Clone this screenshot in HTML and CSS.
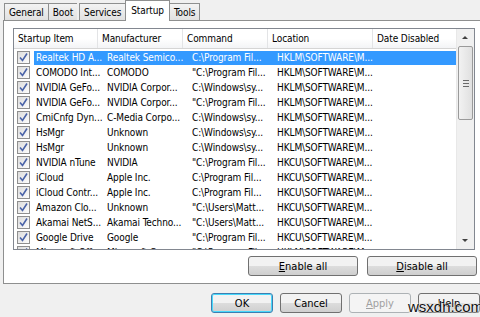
FILE: index.html
```html
<!DOCTYPE html>
<html lang="en">
<head>
  <meta charset="UTF-8">
  <title>System Configuration - Startup</title>
  <link rel="stylesheet" href="styles.css">
</head>
<body>
  <div class="tabs">
    <div class="tab">General</div>
    <div class="tab">Boot</div>
    <div class="tab">Services</div>
    <div class="tab active">Startup</div>
    <div class="tab">Tools</div>
  </div>

  <div class="panel">
    <div class="list">
      <div class="list-body">
        <div class="header">
          <div class="col c1">Startup Item</div>
          <div class="col c2">Manufacturer</div>
          <div class="col c3">Command</div>
          <div class="col c4">Location</div>
          <div class="col c5">Date Disabled</div>
        </div>
        <div class="rows">
          <div class="row selected"><span class="check"><svg viewBox="0 0 11 11"><path d="M2 5.5 L4.5 8.5 L9 1.5"/></svg></span><div class="cells"><div class="col c1">Realtek HD A...</div><div class="col c2">Realtek Semico...</div><div class="col c3">C:\Program Fil...</div><div class="col c4">HKLM\SOFTWARE\M...</div></div></div>
          <div class="row"><span class="check"><svg viewBox="0 0 11 11"><path d="M2 5.5 L4.5 8.5 L9 1.5"/></svg></span><div class="cells"><div class="col c1">COMODO Int...</div><div class="col c2">COMODO</div><div class="col c3">"C:\Program Fil...</div><div class="col c4">HKLM\SOFTWARE\M...</div></div></div>
          <div class="row"><span class="check"><svg viewBox="0 0 11 11"><path d="M2 5.5 L4.5 8.5 L9 1.5"/></svg></span><div class="cells"><div class="col c1">NVIDIA GeFo...</div><div class="col c2">NVIDIA Corpor...</div><div class="col c3">C:\Windows\sy...</div><div class="col c4">HKLM\SOFTWARE\M...</div></div></div>
          <div class="row"><span class="check"><svg viewBox="0 0 11 11"><path d="M2 5.5 L4.5 8.5 L9 1.5"/></svg></span><div class="cells"><div class="col c1">NVIDIA GeFo...</div><div class="col c2">NVIDIA Corpor...</div><div class="col c3">"C:\Program Fil...</div><div class="col c4">HKLM\SOFTWARE\M...</div></div></div>
          <div class="row"><span class="check"><svg viewBox="0 0 11 11"><path d="M2 5.5 L4.5 8.5 L9 1.5"/></svg></span><div class="cells"><div class="col c1">CmiCnfg Dyn...</div><div class="col c2">C-Media Corpo...</div><div class="col c3">C:\Windows\sy...</div><div class="col c4">HKLM\SOFTWARE\M...</div></div></div>
          <div class="row"><span class="check"><svg viewBox="0 0 11 11"><path d="M2 5.5 L4.5 8.5 L9 1.5"/></svg></span><div class="cells"><div class="col c1">HsMgr</div><div class="col c2">Unknown</div><div class="col c3">C:\Windows\sy...</div><div class="col c4">HKLM\SOFTWARE\M...</div></div></div>
          <div class="row"><span class="check"><svg viewBox="0 0 11 11"><path d="M2 5.5 L4.5 8.5 L9 1.5"/></svg></span><div class="cells"><div class="col c1">HsMgr</div><div class="col c2">Unknown</div><div class="col c3">C:\Windows\sy...</div><div class="col c4">HKLM\SOFTWARE\M...</div></div></div>
          <div class="row"><span class="check"><svg viewBox="0 0 11 11"><path d="M2 5.5 L4.5 8.5 L9 1.5"/></svg></span><div class="cells"><div class="col c1">NVIDIA nTune</div><div class="col c2">NVIDIA</div><div class="col c3">"C:\Program Fil...</div><div class="col c4">HKCU\SOFTWARE\M...</div></div></div>
          <div class="row"><span class="check"><svg viewBox="0 0 11 11"><path d="M2 5.5 L4.5 8.5 L9 1.5"/></svg></span><div class="cells"><div class="col c1">iCloud</div><div class="col c2">Apple Inc.</div><div class="col c3">C:\Program Fil...</div><div class="col c4">HKCU\SOFTWARE\M...</div></div></div>
          <div class="row"><span class="check"><svg viewBox="0 0 11 11"><path d="M2 5.5 L4.5 8.5 L9 1.5"/></svg></span><div class="cells"><div class="col c1">iCloud Contr...</div><div class="col c2">Apple Inc.</div><div class="col c3">C:\Program Fil...</div><div class="col c4">HKCU\SOFTWARE\M...</div></div></div>
          <div class="row"><span class="check"><svg viewBox="0 0 11 11"><path d="M2 5.5 L4.5 8.5 L9 1.5"/></svg></span><div class="cells"><div class="col c1">Amazon Clo...</div><div class="col c2">Unknown</div><div class="col c3">"C:\Users\Matt...</div><div class="col c4">HKCU\SOFTWARE\M...</div></div></div>
          <div class="row"><span class="check"><svg viewBox="0 0 11 11"><path d="M2 5.5 L4.5 8.5 L9 1.5"/></svg></span><div class="cells"><div class="col c1">Akamai NetS...</div><div class="col c2">Akamai Techno...</div><div class="col c3">"C:\Users\Matt...</div><div class="col c4">HKCU\SOFTWARE\M...</div></div></div>
          <div class="row"><span class="check"><svg viewBox="0 0 11 11"><path d="M2 5.5 L4.5 8.5 L9 1.5"/></svg></span><div class="cells"><div class="col c1">Google Drive</div><div class="col c2">Google</div><div class="col c3">"C:\Program Fil...</div><div class="col c4">HKCU\SOFTWARE\M...</div></div></div>
          <div class="row"><span class="check"><svg viewBox="0 0 11 11"><path d="M2 5.5 L4.5 8.5 L9 1.5"/></svg></span><div class="cells"><div class="col c1">Microsoft Off...</div><div class="col c2">Microsoft Co...</div><div class="col c3">"C:\Program Fil...</div><div class="col c4">HKLM\SOFTWARE\M...</div></div></div>
        </div>
      </div>
      <div class="scrollbar">
        <div class="arrow up"></div>
        <div class="track">
          <div class="thumb"><span class="grip"></span></div>
        </div>
        <div class="arrow down"></div>
      </div>
    </div>

    <div class="actions">
      <button class="btn wide"><u>E</u>nable all</button>
      <button class="btn wide"><u>D</u>isable all</button>
    </div>
  </div>

  <div class="footer">
    <button class="btn default">OK</button>
    <button class="btn">Cancel</button>
    <button class="btn" disabled><u>A</u>pply</button>
    <button class="btn">Help</button>
  </div>

  <div class="watermark">wsxdn.com</div>
</body>
</html>
```

FILE: styles.css
```css
body {
  margin: 0;
  background: #f0f0f0;
  font-family: 'DejaVu Sans Condensed', 'Liberation Sans', sans-serif;
  font-size: 10px;
  letter-spacing: -0.1px;
  color: #000;
  width: 480px;
  height: 317px;
  overflow: hidden;
  position: relative;
}
.tabs {
  display: flex;
  align-items: flex-end;
  height: 20px;
  padding-left: 4px;
}
.tab {
  height: 17px;
  line-height: 17px;
  padding: 0 4px;
  border: 1px solid #8e8f8f;
  border-bottom: none;
  border-right: none;
  background: linear-gradient(#f3f3f3, #e1e1e1);
  box-sizing: border-box;
}
.tab:nth-child(3) {
  margin-left: 2px;
}
.tab:last-child {
  border-right: 1px solid #8e8f8f;
}
.tab.active {
  height: 21px;
  line-height: 19px;
  background: #fff;
  border-right: 1px solid #8e8f8f;
  margin-bottom: -1px;
  position: relative;
  z-index: 1;
  padding: 0 5px;
}
.tab.active + .tab {
  border-left: none;
}
.panel {
  margin-left: 3px;
  height: 264px;
  box-sizing: border-box;
  background: #fff;
  border: 1px solid #8e8f8f;
  border-right: none;
  padding: 7px 0 0 9px;
}
.list {
  display: flex;
  width: 462px;
  height: 222px;
  box-sizing: border-box;
  border: 1px solid #828790;
  background: #fff;
}
.list-body {
  flex: 1;
  overflow: hidden;
}
.header {
  display: flex;
  height: 19px;
  line-height: 19px;
  background: linear-gradient(#fff 50%, #f3f4f6);
  border-bottom: 1px solid #d5d5d5;
}
.header .col {
  border-right: 1px solid #e3e4e6;
  padding-left: 4px;
}
.col {
  flex: none;
  box-sizing: border-box;
  white-space: nowrap;
  overflow: hidden;
}
.c1 { width: 84px; }
.c2 { width: 85px; }
.c3 { width: 85px; }
.c4 { width: 105px; }
.c5 { width: 84px; }
.rows {
  padding-top: 1px;
}
.row {
  display: flex;
  align-items: center;
  height: 15px;
}
.check {
  flex: none;
  width: 11px;
  height: 11px;
  margin: 0 4px 0 3px;
  border: 1px solid #8f8f8f;
  background: linear-gradient(135deg, #dcdcdc, #fdfdfd);
}
.check svg {
  display: block;
  width: 11px;
  height: 11px;
  fill: none;
  stroke: #4a63a8;
  stroke-width: 1.6;
}
.cells {
  display: flex;
  height: 14px;
  line-height: 14px;
  flex: 1;
}
.cells .c1 { width: 69px; padding-left: 2px; }
.cells .c2, .cells .c3, .cells .c4 { padding-left: 4px; }
.row.selected .cells {
  background: #3399ff;
  color: #fff;
}
.scrollbar {
  flex: none;
  width: 17px;
  display: flex;
  flex-direction: column;
  background: #f0f0f0;
  border-left: 1px solid #e8e8e8;
}
.arrow {
  height: 17px;
  position: relative;
}
.arrow::after {
  content: "";
  position: absolute;
  left: 5px;
  top: 7px;
  border-left: 3px solid transparent;
  border-right: 3px solid transparent;
}
.arrow.up::after {
  border-bottom: 3px solid #404040;
}
.arrow.down::after {
  border-top: 3px solid #404040;
}
.track {
  flex: 1;
}
.thumb {
  margin: 0 1px;
  height: 72px;
  border: 1px solid #9a9a9a;
  border-radius: 2px;
  background: linear-gradient(90deg, #f2f2f2, #e0e0e0);
  display: flex;
  align-items: center;
  justify-content: center;
}
.grip {
  width: 6px;
  height: 5px;
  border-top: 1px solid #6a6a6a;
  border-bottom: 1px solid #6a6a6a;
  position: relative;
}
.grip::after {
  content: "";
  position: absolute;
  left: 0;
  right: 0;
  top: 2px;
  border-top: 1px solid #6a6a6a;
}
.actions {
  display: flex;
  justify-content: flex-end;
  gap: 9px;
  margin-top: 6px;
  padding-right: 3px;
}
.btn {
  font-family: inherit;
  font-size: 11px;
  color: #000;
  height: 20px;
  width: 65px;
  padding: 0;
  border: 1px solid #707070;
  border-radius: 3px;
  background: linear-gradient(#f2f2f2 50%, #dddddd 50%, #cfcfcf);
}
.btn.wide {
  width: 110px;
}
.btn.default {
  border-color: #3c7fb1;
  box-shadow: inset 0 0 0 1px #48d8fb;
}
.btn:disabled {
  color: #a0a0a0;
  border-color: #adb2b5;
  background: #f4f4f4;
}
.footer {
  display: flex;
  gap: 7px;
  padding: 9px 0 0 211px;
}
.watermark {
  position: absolute;
  left: 408px;
  top: 298px;
  font-family: 'Liberation Sans', Arial, sans-serif;
  font-size: 15px;
  letter-spacing: 0;
  color: #111;
  text-shadow: 0 0 2px #fff, 0 0 2px #fff;
}
```
